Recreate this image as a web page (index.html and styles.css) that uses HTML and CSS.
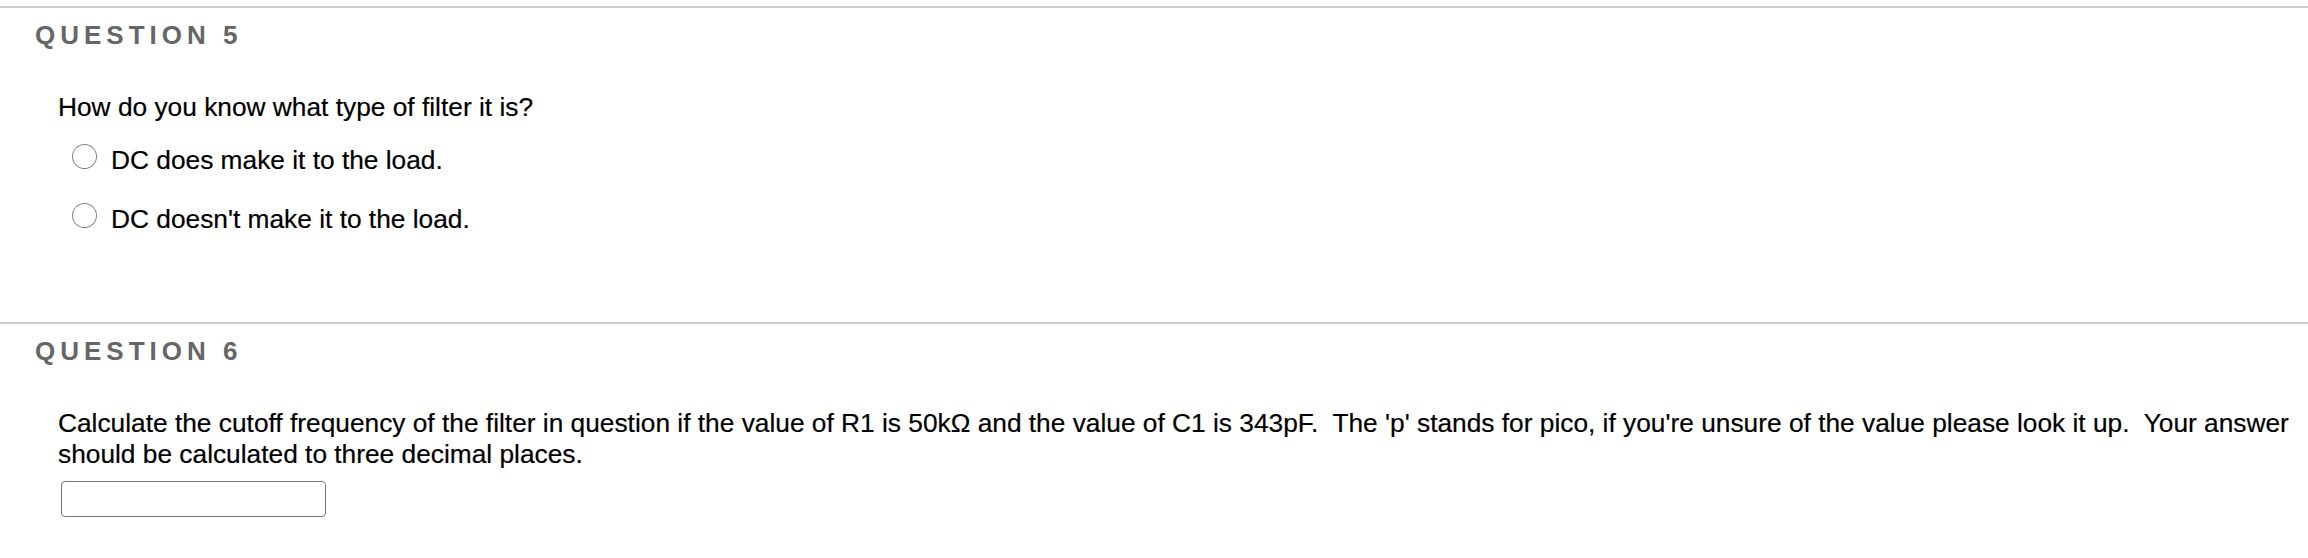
FILE: index.html
```html
<!DOCTYPE html>
<html lang="en">
<head>
<meta charset="utf-8">
<title>Questions</title>
<link rel="stylesheet" href="styles.css">
</head>
<body>
<div class="page">
  <section class="question q-first">
    <h3 class="step-title">Question 5</h3>
    <div class="question-body">
      <p class="question-text">How do you know what type of filter it is?</p>
      <ul class="options">
        <li class="option"><span class="radio"></span><span class="option-label">DC does make it to the load.</span></li>
        <li class="option"><span class="radio"></span><span class="option-label">DC doesn't make it to the load.</span></li>
      </ul>
    </div>
  </section>
  <section class="question">
    <h3 class="step-title">Question 6</h3>
    <div class="question-body">
      <p class="question-text">Calculate the cutoff frequency of the filter in question if the value of R1 is 50kΩ and the value of C1 is 343pF.&nbsp; The 'p' stands for pico, if you're unsure of the value please look it up.&nbsp; Your answer should be calculated to three decimal places.</p>
      <input class="answer-input" type="text" aria-label="Answer">
    </div>
  </section>
</div>
</body>
</html>
```
FILE: styles.css
```css
html, body {
  margin: 0;
  padding: 0;
  background: #ffffff;
}

body {
  font-family: "Liberation Sans", Arial, Helvetica, sans-serif;
  color: #000000;
}

.page {
  padding-top: 6px;
}

.question {
  border-top: 2px solid #cccccc;
}

.q-first {
  height: 314px;
}

.step-title {
  margin: 0;
  padding: 12px 0 0 35px;
  font-size: 26px;
  line-height: 30px;
  font-weight: bold;
  text-transform: uppercase;
  letter-spacing: 5px;
  color: #666666;
}

.question-body {
  padding: 42px 0 0 58px;
}

.question-text {
  margin: 0;
  font-size: 26.3px;
  line-height: 31px;
  -webkit-text-stroke: 0.2px #000000;
}

.options {
  list-style: none;
  margin: 22px 0 0 0;
  padding: 0 0 0 14px;
  display: flex;
  flex-direction: column;
  gap: 28px;
}

.option {
  display: flex;
  align-items: flex-start;
  gap: 14px;
  font-size: 26.3px;
  line-height: 31px;
  -webkit-text-stroke: 0.2px #000000;
}

.radio {
  flex: none;
  width: 25px;
  height: 25px;
  margin-top: -1px;
  box-sizing: border-box;
  border-radius: 50%;
  border: 1.5px solid #858585;
  border-bottom-color: #707070;
  background: #ffffff;
}

.answer-input {
  display: block;
  margin: 11px 0 0 3px;
  width: 265px;
  height: 36px;
  box-sizing: border-box;
  border: 1.5px solid #767676;
  border-radius: 4px;
  background: #ffffff;
  padding: 0 6px;
  font: inherit;
  font-size: 20px;
}
```
